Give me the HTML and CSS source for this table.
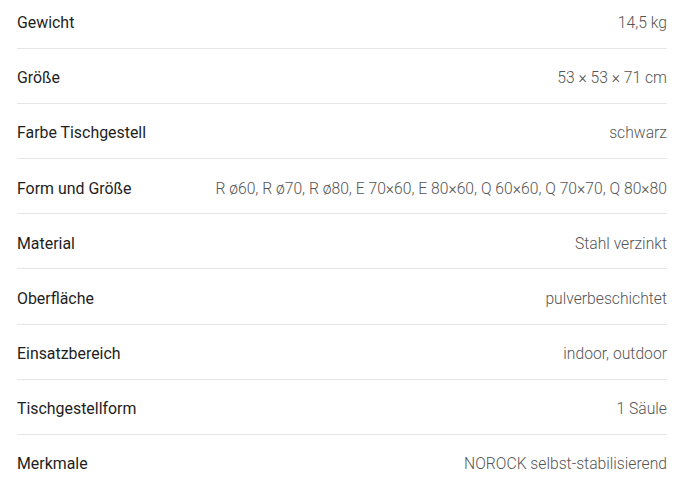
FILE: index.html
```html
<!DOCTYPE html>
<html lang="de">
<head>
<meta charset="utf-8">
<link rel="stylesheet" href="styles.css">
</head>
<body>
<div class="specs">
  <div class="row"><span class="label">Gewicht</span><span class="value">14,5 kg</span></div>
  <div class="row"><span class="label">Größe</span><span class="value">53 × 53 × 71 cm</span></div>
  <div class="row"><span class="label">Farbe Tischgestell</span><span class="value">schwarz</span></div>
  <div class="row"><span class="label">Form und Größe</span><span class="value">R ø60, R ø70, R ø80, E 70×60, E 80×60, Q 60×60, Q 70×70, Q 80×80</span></div>
  <div class="row"><span class="label">Material</span><span class="value">Stahl verzinkt</span></div>
  <div class="row"><span class="label">Oberfläche</span><span class="value">pulverbeschichtet</span></div>
  <div class="row"><span class="label">Einsatzbereich</span><span class="value">indoor, outdoor</span></div>
  <div class="row"><span class="label">Tischgestellform</span><span class="value">1 Säule</span></div>
  <div class="row"><span class="label">Merkmale</span><span class="value">NOROCK selbst-stabilisierend</span></div>
</div>
</body>
</html>
```
FILE: styles.css
```css
html, body {
  margin: 0;
  padding: 0;
  background: #fff;
}
body {
  font-family: Roboto, "Noto Sans", sans-serif;
  line-height: 18px;
}
.specs {
  width: 650px;
  margin-left: 17px;
}
.row {
  display: flex;
  justify-content: space-between;
  align-items: center;
  padding: 20.4px 0 15.74px;
  border-bottom: 1px solid #e6e6e6;
}
.row:first-child {
  padding-top: 14.2px;
}
.row:last-child {
  border-bottom: none;
}
.label {
  color: #1e1e1e;
  font-size: 15.9px;
}
.value {
  color: #555;
  font-size: 15.7px;
  font-weight: 300;
}
```
